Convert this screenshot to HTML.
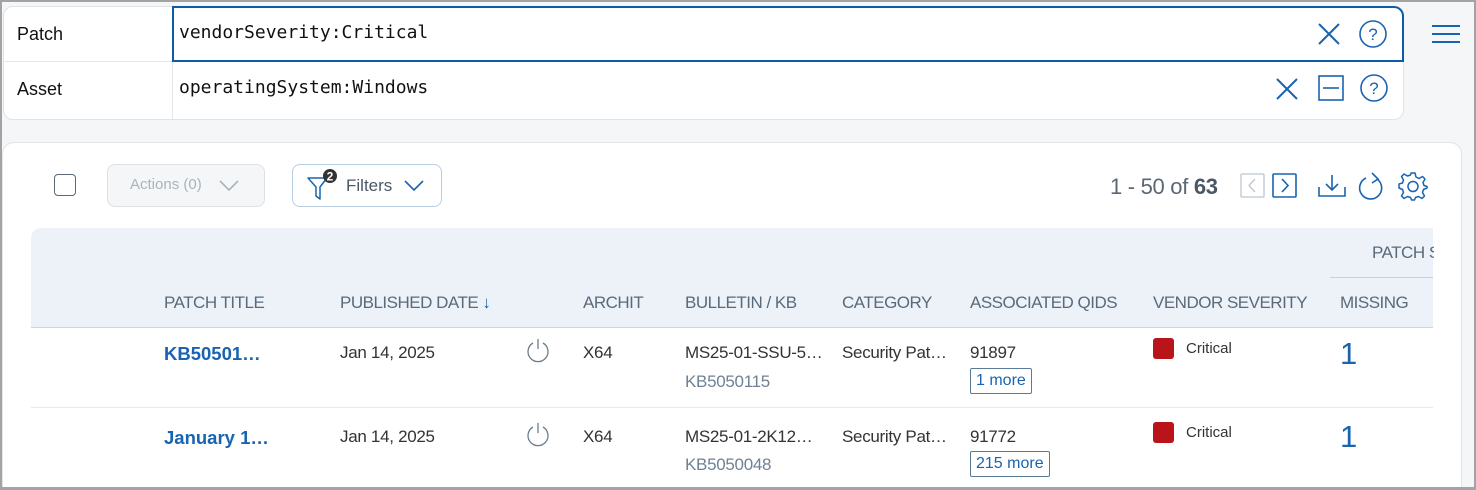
<!DOCTYPE html>
<html><head><meta charset="utf-8"><style>
*{box-sizing:border-box;margin:0;padding:0}
html,body{width:1476px;height:490px;overflow:hidden}
body{background:#f5f6f8;font-family:"Liberation Sans",sans-serif;position:relative}
.frame{position:absolute;left:0;top:0;width:1476px;height:490px;border:2px solid #a3a3a3;border-bottom-width:3px;z-index:10;pointer-events:none}
.a{position:absolute;white-space:nowrap}
.mono{font-family:"DejaVu Sans Mono","Liberation Mono",monospace;font-size:18px;color:#111}
.hd{font-size:17px;color:#5a6a7a;letter-spacing:-0.5px}
.cell{font-size:17px;color:#333;letter-spacing:-0.3px}
.sub{font-size:17px;color:#6e8294;letter-spacing:-0.3px}
.more{border:1px solid #5a7b98;border-radius:2px;color:#1a63b0;font-size:16px;padding:2px 5px;height:26px;line-height:20px}
.sev{width:21px;height:21px;background:#b8141a;border-radius:3px}
</style></head><body>
<div class="frame"></div>
<div class="a" style="left:3px;top:6px;width:1401px;height:114px;background:#fff;border:1px solid #dfe3e8;border-radius:10px"></div>
<div class="a" style="left:172px;top:62px;width:1px;height:57px;background:#e3e6ea"></div>
<div class="a" style="left:3px;top:61px;width:170px;height:1px;background:#e3e6ea"></div>
<div class="a" style="left:172px;top:6px;width:1232px;height:56px;border:2px solid #0e5baa;border-radius:0 10px 0 0"></div>
<div class="a" style="left:17px;top:24px;font-size:18px;color:#111">Patch</div>
<div class="a" style="left:17px;top:79px;font-size:18px;color:#111">Asset</div>
<div class="a mono" style="left:179px;top:22px">vendorSeverity:Critical</div>
<div class="a mono" style="left:179px;top:77px">operatingSystem:Windows</div>
<svg class="a" style="left:1318px;top:23px" width="22" height="22"><path d="M1 1L21 21M21 1L1 21" stroke="#1a63b0" stroke-width="2"/></svg>
<svg class="a" style="left:1358px;top:19px" width="30" height="30"><circle cx="15" cy="15" r="13" fill="none" stroke="#1a63b0" stroke-width="1.6"/><text x="15" y="21" text-anchor="middle" font-size="17" fill="#1a63b0" font-family="Liberation Sans">?</text></svg>
<svg class="a" style="left:1432px;top:24px" width="28" height="20"><path d="M0 2H28M0 10H28M0 18H28" stroke="#1a63b0" stroke-width="2"/></svg>
<svg class="a" style="left:1276px;top:78px" width="22" height="22"><path d="M1 1L21 21M21 1L1 21" stroke="#1a63b0" stroke-width="2"/></svg>
<svg class="a" style="left:1318px;top:75px" width="26" height="26"><rect x="1" y="1" width="24" height="24" fill="none" stroke="#1a63b0" stroke-width="1.6"/><path d="M5 13H21" stroke="#1a63b0" stroke-width="1.6"/></svg>
<svg class="a" style="left:1359px;top:73px" width="30" height="30"><circle cx="15" cy="15" r="13" fill="none" stroke="#1a63b0" stroke-width="1.6"/><text x="15" y="21" text-anchor="middle" font-size="17" fill="#1a63b0" font-family="Liberation Sans">?</text></svg>
<div class="a" style="left:2px;top:142px;width:1460px;height:346px;background:#fff;border:1px solid #e1e4e8;border-bottom:none;border-radius:12px 12px 0 0"></div>
<div class="a" style="left:54px;top:174px;width:22px;height:22px;border:1.5px solid #5a6876;border-radius:4px;background:#fff"></div>
<div class="a" style="left:107px;top:164px;width:158px;height:43px;border:1px solid #dde1e6;border-radius:8px;background:#f5f6f8"></div>
<div class="a" style="left:130px;top:176px;font-size:15px;color:#a9b3bd">Actions (0)</div>
<svg class="a" style="left:219px;top:180px" width="20" height="12"><path d="M1 1L10 10L19 1" stroke="#a9b3bd" stroke-width="1.6" fill="none"/></svg>
<div class="a" style="left:292px;top:164px;width:150px;height:43px;border:1px solid #b8cce2;border-radius:8px;background:#fff"></div>
<svg class="a" style="left:306px;top:168px" width="32" height="34"><path d="M2 10H21L14 19V31L10 28V19Z" fill="none" stroke="#1a63b0" stroke-width="1.5" stroke-linejoin="round"/><circle cx="24" cy="8" r="7" fill="#333"/><text x="24" y="12.5" text-anchor="middle" font-size="12" font-weight="bold" fill="#fff" font-family="Liberation Sans">2</text></svg>
<div class="a" style="left:346px;top:176px;font-size:17px;color:#4a5866">Filters</div>
<svg class="a" style="left:404px;top:180px" width="20" height="12"><path d="M1 1L10 10L19 1" stroke="#1a63b0" stroke-width="1.6" fill="none"/></svg>
<div class="a" style="left:1110px;top:174px;font-size:22px;color:#5a6774;letter-spacing:-0.3px">1 - 50 of <b style="color:#4a5866">63</b></div>
<svg class="a" style="left:1240px;top:173px" width="26" height="26"><rect x="1" y="1" width="23" height="23" fill="none" stroke="#bcc6cf" stroke-width="1.3" rx="1"/><path d="M15 6L9 12.5L15 19" stroke="#bcc6cf" stroke-width="1.3" fill="none"/></svg>
<svg class="a" style="left:1272px;top:173px" width="26" height="26"><rect x="1" y="1" width="23" height="23" fill="none" stroke="#1a63b0" stroke-width="1.6" rx="1"/><path d="M10 6L16 12.5L10 19" stroke="#1a63b0" stroke-width="1.6" fill="none"/></svg>
<svg class="a" style="left:1317px;top:173px" width="30" height="25"><path d="M2 14V23H28V14M15 2V17M9 11L15 17L21 11" stroke="#1a63b0" stroke-width="1.6" fill="none"/></svg>
<svg class="a" style="left:1358px;top:171px" width="28" height="30"><path d="M19 8A11 11 0 1 1 8 7" stroke="#1a63b0" stroke-width="1.6" fill="none"/><path d="M14 2L20 8L14 12" stroke="#1a63b0" stroke-width="1.6" fill="none"/></svg>
<svg class="a" style="left:1398px;top:171px" width="30" height="30" viewBox="0 0 30 30"><path d="M13 2H17L18 6L21 7.5L24.5 5.5L27 8L25 11.5L26 14.5L29 15.5V17L25.5 18.5L24.5 21.5L26.5 25L24 27.5L20.5 25.5L17.5 26.5L16.5 29H13.5L12.5 26.5L9.5 25.5L6 27.5L3.5 25L5.5 21.5L4.5 18.5L1 17V13L4.5 12L5.5 9L3.5 5.5L6 3L9.5 5L12.5 4Z" fill="none" stroke="#1a63b0" stroke-width="1.5" stroke-linejoin="round"/><circle cx="15" cy="15.5" r="5" fill="none" stroke="#1a63b0" stroke-width="1.5"/></svg>
<div class="a" style="left:31px;top:228px;width:1402px;height:100px;background:#edf2f9;border-radius:10px 0 0 0;border-bottom:1px solid #c9d6e4"></div>
<div class="a" style="left:1330px;top:277px;width:103px;height:1px;background:#c3d2e2"></div>
<div class="a hd" style="left:1372px;top:243px">PATCH S</div>
<div class="a" style="left:1434px;top:228px;width:27px;height:260px;background:#fff"></div>
<div class="a hd" style="left:164px;top:293px">PATCH TITLE</div>
<div class="a hd" style="left:340px;top:293px">PUBLISHED DATE <span style="color:#1a63b0">↓</span></div>
<div class="a hd" style="left:583px;top:293px">ARCHIT</div>
<div class="a hd" style="left:685px;top:293px">BULLETIN / KB</div>
<div class="a hd" style="left:842px;top:293px">CATEGORY</div>
<div class="a hd" style="left:970px;top:293px">ASSOCIATED QIDS</div>
<div class="a hd" style="left:1153px;top:293px">VENDOR SEVERITY</div>
<div class="a hd" style="left:1340px;top:293px">MISSING</div>
<div class="a" style="left:31px;top:407px;width:1402px;height:1px;background:#e6e9ed"></div>
<div class="a" style="left:164px;top:343px;font-size:18.5px;font-weight:bold;color:#1a63b0">KB50501…</div>
<div class="a cell" style="left:340px;top:343px">Jan 14, 2025</div>
<svg class="a" style="left:525px;top:338px" width="26" height="26"><path d="M8 5A10 10 0 1 0 18 5M13 1V11" stroke="#6b7d8c" stroke-width="1.3" fill="none"/></svg>
<div class="a cell" style="left:583px;top:343px">X64</div>
<div class="a cell" style="left:685px;top:343px">MS25-01-SSU-5…</div>
<div class="a sub" style="left:685px;top:372px">KB5050115</div>
<div class="a cell" style="left:842px;top:343px">Security Pat…</div>
<div class="a cell" style="left:970px;top:343px">91897</div>
<div class="a more" style="left:970px;top:368px">1 more</div>
<div class="a sev" style="left:1153px;top:338px"></div>
<div class="a" style="left:1186px;top:340px;font-size:15px;color:#333">Critical</div>
<div class="a" style="left:1340px;top:336px;font-size:31px;color:#1a63b0;font-weight:300">1</div>
<div class="a" style="left:164px;top:427px;font-size:18.5px;font-weight:bold;color:#1a63b0">January 1…</div>
<div class="a cell" style="left:340px;top:427px">Jan 14, 2025</div>
<svg class="a" style="left:525px;top:422px" width="26" height="26"><path d="M8 5A10 10 0 1 0 18 5M13 1V11" stroke="#6b7d8c" stroke-width="1.3" fill="none"/></svg>
<div class="a cell" style="left:583px;top:427px">X64</div>
<div class="a cell" style="left:685px;top:427px">MS25-01-2K12…</div>
<div class="a sub" style="left:685px;top:455px">KB5050048</div>
<div class="a cell" style="left:842px;top:427px">Security Pat…</div>
<div class="a cell" style="left:970px;top:427px">91772</div>
<div class="a more" style="left:970px;top:451px">215 more</div>
<div class="a sev" style="left:1153px;top:422px"></div>
<div class="a" style="left:1186px;top:424px;font-size:15px;color:#333">Critical</div>
<div class="a" style="left:1340px;top:419px;font-size:31px;color:#1a63b0;font-weight:300">1</div>
</body></html>
